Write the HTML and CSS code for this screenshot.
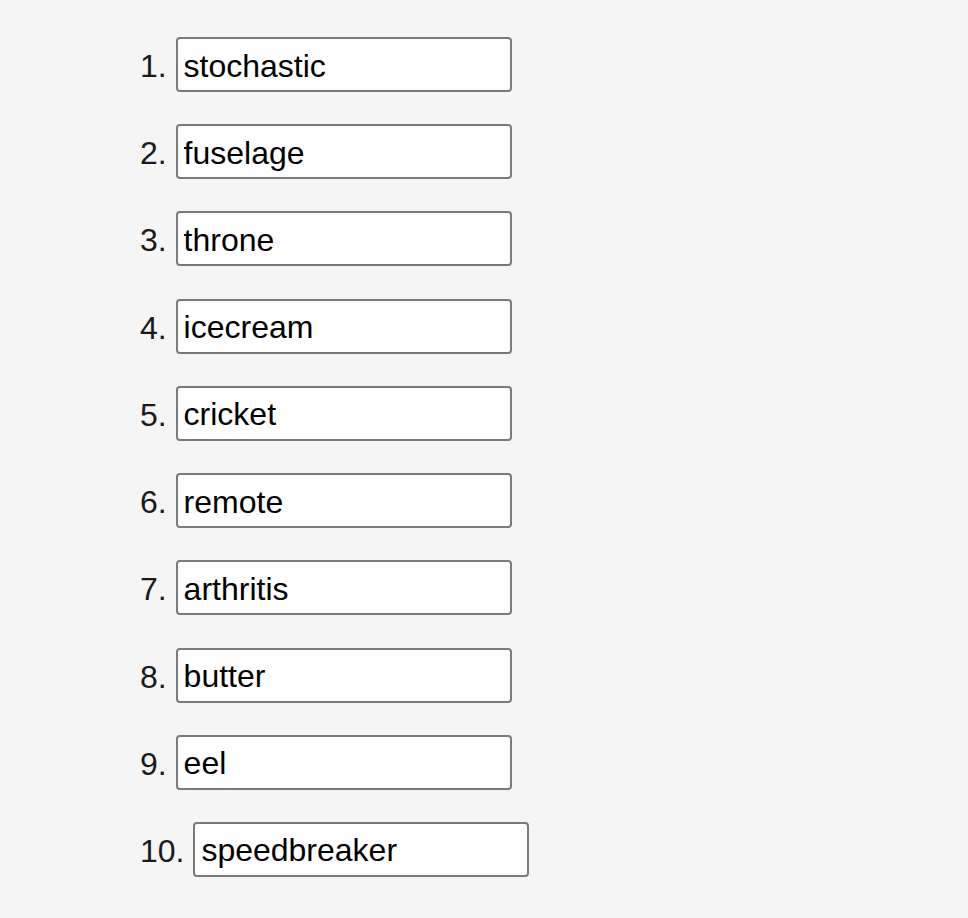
FILE: index.html
```html
<!DOCTYPE html>
<html>
<head>
<meta charset="utf-8">
<link rel="stylesheet" href="styles.css">
</head>
<body>
<ol class="words">
  <li><input class="word" type="text" value="stochastic"></li>
  <li><input class="word" type="text" value="fuselage"></li>
  <li><input class="word" type="text" value="throne"></li>
  <li><input class="word" type="text" value="icecream"></li>
  <li><input class="word" type="text" value="cricket"></li>
  <li><input class="word" type="text" value="remote"></li>
  <li><input class="word" type="text" value="arthritis"></li>
  <li><input class="word" type="text" value="butter"></li>
  <li><input class="word" type="text" value="eel"></li>
  <li><input class="word" type="text" value="speedbreaker"></li>
</ol>
</body>
</html>
```
FILE: styles.css
```css
html, body {
  margin: 0;
  padding: 0;
  background: #f5f5f5;
}
body {
  font-family: "Liberation Sans", Arial, Helvetica, sans-serif;
  font-size: 32px;
  color: #1a1a1a;
}
.words {
  margin: 0;
  padding: 37px 0 0 140px;
  list-style-position: inside;
  display: grid;
  justify-items: start;
  row-gap: 32.22px;
}
.words li {
  height: 55px;
  line-height: 55px;
}
.word {
  box-sizing: border-box;
  width: 336px;
  height: 55px;
  padding: 3px 5px 0 6px;
  border: 2px solid #7a7a7a;
  border-radius: 4px;
  background: #fff;
  color: #000;
  font-family: "Liberation Sans", Arial, Helvetica, sans-serif;
  font-size: 32px;
  margin: 0;
  outline: none;
}
```
